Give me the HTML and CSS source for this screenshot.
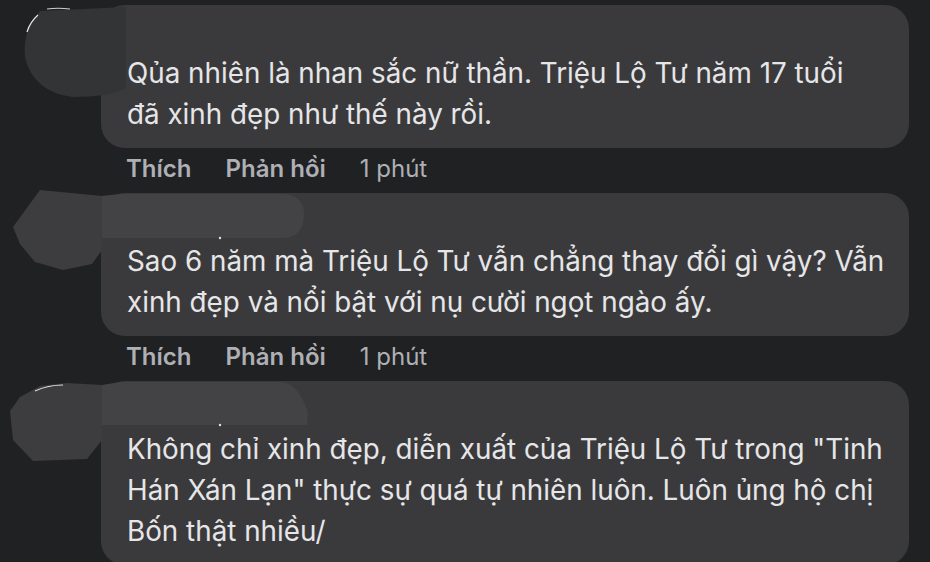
FILE: index.html
```html
<!DOCTYPE html>
<html lang="vi">
<head>
<meta charset="utf-8">
<title>Bình luận</title>
<link rel="stylesheet" href="styles.css">
</head>
<body>
<div class="thread">
  <div class="comment">
    <div class="bubble">
      <p class="text">Qủa nhiên là nhan sắc nữ thần. Triệu Lộ Tư năm 17 tuổi<br>đã xinh đẹp như thế này rồi.</p>
    </div>
    <div class="actions"><span class="act">Thích</span><span class="act">Phản hồi</span><span class="time">1 phút</span></div>
  </div>
  <div class="comment">
    <div class="bubble">
      <p class="text">Sao 6 năm mà Triệu Lộ Tư vẫn chẳng thay đổi gì vậy? Vẫn<br>xinh đẹp và nổi bật với nụ cười ngọt ngào ấy.</p>
    </div>
    <div class="actions"><span class="act">Thích</span><span class="act">Phản hồi</span><span class="time">1 phút</span></div>
  </div>
  <div class="comment">
    <div class="bubble">
      <p class="text">Không chỉ xinh đẹp, diễn xuất của Triệu Lộ Tư trong "Tinh<br>Hán Xán Lạn" thực sự quá tự nhiên luôn. Luôn ủng hộ chị<br>Bốn thật nhiều/</p>
    </div>
  </div>
</div>
<svg class="smudges" width="930" height="562" viewBox="0 0 930 562" aria-hidden="true">
  <path d="M40 11 L126 7 L126 88 Q110 97 72 97 Q34 92 25 58 Q22 30 40 11 Z" fill="#333436"/>
  <path d="M27 32 Q30 22 38 15" stroke="#e8e8e8" stroke-width="1.2" fill="none"/>
  <path d="M47 9 Q58 7.5 70 9" stroke="#cfcfcf" stroke-width="1.2" fill="none"/>

  <path d="M13 227 L40 190 L102 196 L102 250 L92 264 L63 270 L35 262 L20 244 Z" fill="#3d3d3f"/>
  <path d="M102 196 L120 194 L285 194 Q305 196 304 216 Q303 236 285 238 L102 238 Z" fill="#434345"/>
  <circle cx="220" cy="238" r="1.2" fill="#e0e0e0"/>

  <path d="M10 411 L20 397 L40 386 L67 383 L102 385 L102 440 L87 459 L33 461 L13 440 Z" fill="#3d3d3f"/>
  <path d="M102 385 L120 382 L283 382 Q298 384 308 412 L307 425 L102 425 Z" fill="#434345"/>
  <path d="M35 391 Q48 385 63 385" stroke="#e0e0e0" stroke-width="1.2" fill="none"/>
  <circle cx="220" cy="425" r="1.2" fill="#e0e0e0"/>
</svg>
</body>
</html>
```
FILE: styles.css
```css
html, body {
  margin: 0;
  padding: 0;
  background: #202123;
}
body {
  width: 930px;
  height: 562px;
  overflow: hidden;
  position: relative;
  font-family: Inter, "Liberation Sans", sans-serif;
}
.thread {
  padding: 5px 0 0 101px;
  width: 808px;
}
.comment {
  display: flex;
  flex-direction: column;
}
.bubble {
  background: #3a3a3c;
  border-radius: 24px;
  padding: 48px 20px 13px 26px;
}
.text {
  margin: 0;
  color: #e6e6e8;
  font-size: 27.8px;
  line-height: 41px;
  white-space: nowrap;
}
.actions {
  display: flex;
  gap: 34px;
  height: 45px;
  box-sizing: border-box;
  padding: 3px 0 6px 25px;
  line-height: 36px;
  font-size: 24px;
  color: #aeb0b5;
}
.act {
  font-weight: 600;
}
.time {
  font-weight: 400;
}
.smudges {
  position: absolute;
  left: 0;
  top: 0;
  pointer-events: none;
}
```
